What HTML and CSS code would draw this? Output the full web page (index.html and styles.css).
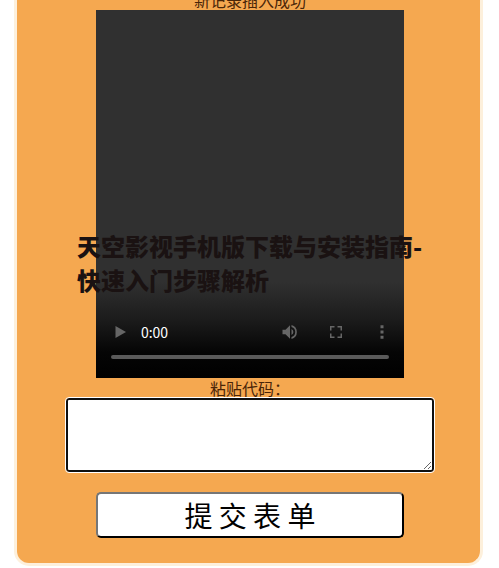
FILE: index.html
```
<!DOCTYPE html>
<html lang="zh-CN">
<head>
    <meta charset="UTF-8">
    <meta name="viewport" content="width=device-width, initial-scale=1.0">
    <title>提交表单</title>
    <link rel="stylesheet" href="styles.css">
</head>
<body>

<form class="card">
    <p class="message">新记录插入成功</p>

    <!-- Video player -->
    <div class="player">
        <div class="controls">
            <div class="control-row">
                <button type="button" class="icon-button" aria-label="播放">
                    <svg viewBox="0 0 24 24"><path d="M6 4v16l14-8z"/></svg>
                </button>
                <span class="time">0:00</span>
                <button type="button" class="icon-button" aria-label="音量">
                    <svg viewBox="0 0 24 24"><path d="M2 9v6h4l6 6V3L6 9H2zm14.500 3A4.500 4.500 0 0 0 14 7.970v8.050A4.500 4.500 0 0 0 16.500 12zM14 2.800v2.500a7 7 0 0 1 0 13.400v2.500a9.500 9.500 0 0 0 0-18.400z"/></svg>
                </button>
                <button type="button" class="icon-button" aria-label="全屏">
                    <svg viewBox="0 0 24 24"><path d="M4 4h6v2H6v4H4zM14 4h6v6h-2V6h-4zM4 14h2v4h4v2H4zM18 14h2v6h-6v-2h4z"/></svg>
                </button>
                <button type="button" class="icon-button" aria-label="更多">
                    <svg viewBox="0 0 24 24"><path d="M10 3h4v4h-4zM10 10h4v4h-4zM10 17h4v4h-4z"/></svg>
                </button>
            </div>
            <input type="range" class="timeline" min="0" max="100" value="0" aria-label="进度">
        </div>
    </div>

    <!-- Code form -->
    <label for="code">粘贴代码：</label>
    <textarea id="code" name="code" class="code"></textarea>
    <button type="submit" class="submit">提 交 表 单</button>
</form>

<h1 class="title">天空影视手机版下载与安装指南-<br>快速入门步骤解析</h1>

</body>
</html>
```
FILE: styles.css
```
body {
    margin: 0;
    background-color: #fff;
    color: #4a2508;
    font-family: "Noto Sans CJK SC", sans-serif;
    font-size: 16px;
    line-height: 20px;
}
.card {
    display: flex;
    flex-direction: column;
    align-items: center;
    margin: -20px 16px 0 14px;
    padding: 10px 0 25px 3px;
    border: 3px solid #fdf0dc;
    border-top: 0;
    border-radius: 0 0 15px 15px;
    background-color: #f5a850;
}
.message {
    margin: 0;
}
.player {
    display: flex;
    flex-direction: column;
    justify-content: flex-end;
    box-sizing: border-box;
    width: 67%;
    aspect-ratio: 309 / 368;
    min-height: 368px;
    background: linear-gradient(to bottom, #303030 74%, #1c1c1c 84%, #050505 93%, #000 100%);
}
.controls {
    padding: 0 15px 19px;
}
.control-row {
    display: flex;
    align-items: center;
    gap: 28px;
    height: 30px;
}
.icon-button {
    width: 18px;
    height: 18px;
    padding: 0;
    border: 0;
    background: none;
    cursor: pointer;
}
.icon-button svg {
    display: block;
    width: 18px;
    height: 18px;
    fill: #666;
}
.time {
    flex: 1;
    margin-left: -16px;
    color: #fff;
    font-size: 14px;
}
.control-row .icon-button:last-child {
    margin-right: -2px;
}
.timeline {
    appearance: none;
    display: block;
    width: 100%;
    height: 4px;
    margin: 8px 0 0;
    border-radius: 2px;
    background-color: #5a5a5a;
}
.timeline::-webkit-slider-thumb {
    appearance: none;
    width: 0;
    height: 0;
}
.code {
    box-sizing: border-box;
    width: 80%;
    height: 74px;
    border: 2px solid #101010;
    border-radius: 3px;
    outline: 1px solid #fff;
    outline-offset: 0;
    background-color: #fff;
    font-family: inherit;
    font-size: 16px;
}
.submit {
    width: 67%;
    height: 46px;
    margin-top: 20px;
    padding: 0;
    border: 2px outset #222;
    border-radius: 5px;
    background-color: #fff;
    color: #000;
    font-family: inherit;
    font-size: 28px;
    line-height: 40px;
}
.title {
    position: absolute;
    top: 229px;
    left: 0;
    right: 0;
    width: max-content;
    margin: 0 auto;
    color: #1a1212;
    font-size: 24px;
    font-weight: 900;
    line-height: 34px;
}
```
